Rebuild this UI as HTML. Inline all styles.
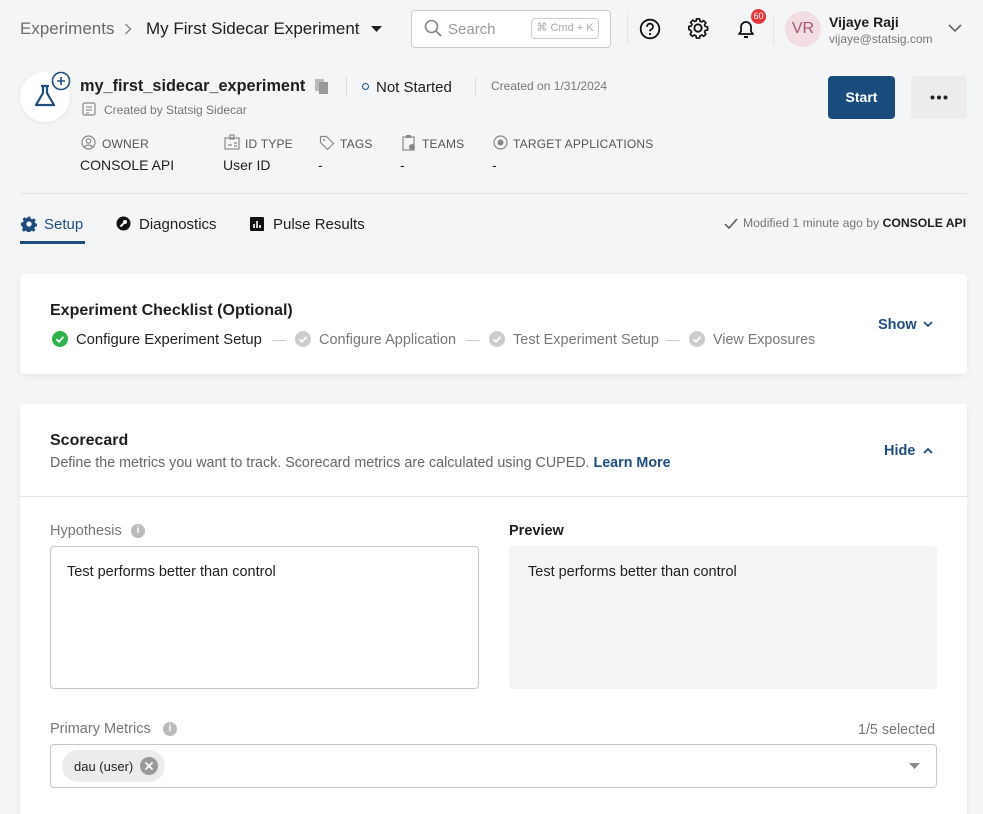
<!DOCTYPE html>
<html><head><meta charset="utf-8"><style>
*{box-sizing:border-box;margin:0;padding:0}
html{width:983px;height:814px;overflow:hidden}
body{width:983px;height:814px;overflow:hidden;background:#f4f5f7;font-family:"Liberation Sans",sans-serif;color:#1f1f1f;position:relative}
.a{position:absolute;white-space:nowrap}
.card{position:absolute;background:#fff;border-radius:4px;box-shadow:0 2px 6px rgba(0,0,0,.06)}
.lbl{font-size:12px;color:#555;letter-spacing:.2px}
.val{font-size:14px;color:#1f1f1f}
.g{color:#777}
</style></head><body>
<!-- header -->
<div class="a" style="left:20px;top:19px;font-size:17px;color:#6b6b6b">Experiments</div>
<svg class="a" style="left:124px;top:23px" width="8" height="12"><path d="M1.5 1l5 5-5 5" fill="none" stroke="#888" stroke-width="1.5"/></svg>
<div class="a" style="left:146px;top:19px;font-size:17px;color:#1f1f1f">My First Sidecar Experiment</div>
<svg class="a" style="left:371px;top:26px" width="11" height="6"><path d="M0 0h11L5.5 6z" fill="#222"/></svg>
<div class="a" style="left:411px;top:10px;width:200px;height:38px;border:1px solid #ccc;border-radius:4px;background:#fff"></div>
<svg class="a" style="left:424px;top:19px" width="18" height="18"><circle cx="7.5" cy="7.5" r="6" fill="none" stroke="#888" stroke-width="1.6"/><path d="M12 12l5 5" stroke="#888" stroke-width="1.8"/></svg>
<div class="a" style="left:448px;top:21px;font-size:15px;color:#999">Search</div>
<div class="a" style="left:531px;top:18px;width:68px;height:21px;border:1px solid #ccc;border-radius:4px;font-size:11px;color:#aaa;text-align:center;line-height:19px">⌘ Cmd + K</div>
<div class="a" style="left:627px;top:14px;width:1px;height:30px;background:#e2e2e2"></div>
<svg class="a" style="left:639px;top:18px" width="22" height="22"><circle cx="11" cy="11" r="9.3" fill="none" stroke="#111" stroke-width="1.8"/><path d="M8 8.7a3 3 0 1 1 4 2.8c-.8.4-1 .9-1 1.8" fill="none" stroke="#111" stroke-width="1.8"/><circle cx="11" cy="16" r="1.1" fill="#111"/></svg>
<svg class="a" style="left:687px;top:17px" width="22" height="22" viewBox="0 0 24 24"><path d="M12 8a4 4 0 1 0 0 8a4 4 0 1 0 0-8z" fill="none" stroke="#111" stroke-width="2"/><path d="M10.3 2h3.4l.5 2.6 1.8.8 2.2-1.5 2.4 2.4-1.5 2.2.8 1.8 2.6.5v3.4l-2.6.5-.8 1.8 1.5 2.2-2.4 2.4-2.2-1.5-1.8.8-.5 2.6h-3.4l-.5-2.6-1.8-.8-2.2 1.5-2.4-2.4 1.5-2.2-.8-1.8L2 13.7v-3.4l2.6-.5.8-1.8-1.5-2.2 2.4-2.4 2.2 1.5 1.8-.8z" fill="none" stroke="#111" stroke-width="1.8" stroke-linejoin="round"/></svg>
<svg class="a" style="left:736px;top:18px" width="20" height="22"><path d="M3 16h14l-2-2.5V9a5 5 0 0 0-10 0v4.5z" fill="none" stroke="#111" stroke-width="1.8" stroke-linejoin="round"/><path d="M8 19h4" stroke="#111" stroke-width="2"/></svg>
<div class="a" style="left:751px;top:9px;width:15px;height:15px;border-radius:50%;background:#e8363b;color:#fff;font-size:9px;text-align:center;line-height:15px">60</div>
<div class="a" style="left:773px;top:14px;width:1px;height:30px;background:#e2e2e2"></div>
<div class="a" style="left:785px;top:11px;width:36px;height:36px;border-radius:50%;background:#f2dde3;color:#a05a70;font-size:16px;text-align:center;line-height:36px">VR</div>
<div class="a" style="left:829px;top:14px;font-size:14px;font-weight:bold">Vijaye Raji</div>
<div class="a" style="left:829px;top:32px;font-size:12px;color:#777">vijaye@statsig.com</div>
<svg class="a" style="left:948px;top:24px" width="14" height="9"><path d="M1 1l6 6 6-6" fill="none" stroke="#666" stroke-width="1.6"/></svg>

<!-- experiment header -->
<div class="a" style="left:20px;top:72px;width:50px;height:50px;border-radius:50%;background:#fff;box-shadow:0 1px 4px rgba(0,0,0,.08)"></div>
<svg class="a" style="left:33px;top:84px" width="24" height="24"><path d="M8 2h8M10 2v7L3 21h18L14 9V2" fill="none" stroke="#1f4e7e" stroke-width="2.2" stroke-linejoin="round"/></svg>
<svg class="a" style="left:51px;top:71px" width="20" height="20"><circle cx="10" cy="10" r="8.5" fill="#fff" stroke="#1f4e7e" stroke-width="1.6"/><path d="M10 6v8M6 10h8" stroke="#1f4e7e" stroke-width="1.6"/></svg>
<div class="a" style="left:80px;top:77px;font-size:16.3px;font-weight:bold">my_first_sidecar_experiment</div>
<svg class="a" style="left:314px;top:78px" width="16" height="18"><rect x="1" y="1" width="9" height="12" fill="#bbb"/><rect x="5" y="4" width="9" height="12" fill="#999"/></svg>
<div class="a" style="left:346px;top:77px;width:1px;height:20px;background:#ddd"></div>
<div class="a" style="left:362px;top:83px;width:7px;height:7px;border-radius:50%;border:1.5px solid #1f4e7e"></div>
<div class="a" style="left:376px;top:79px;font-size:15px">Not Started</div>
<div class="a" style="left:475px;top:77px;width:1px;height:20px;background:#ddd"></div>
<div class="a" style="left:491px;top:79px;font-size:12px;color:#777">Created on 1/31/2024</div>
<svg class="a" style="left:82px;top:102px" width="14" height="14"><rect x="1" y="1" width="12" height="12" rx="1.5" fill="none" stroke="#999" stroke-width="1.4"/><path d="M4 5h6M4 8h6M4 11h3" stroke="#999" stroke-width="1.3"/></svg>
<div class="a" style="left:104px;top:103px;font-size:12px;color:#777">Created by Statsig Sidecar</div>
<div class="a" style="left:828px;top:76px;width:67px;height:43px;border-radius:4px;background:#194b7d;color:#fff;font-weight:bold;font-size:14px;text-align:center;line-height:43px">Start</div>
<div class="a" style="left:911px;top:76px;width:56px;height:43px;border-radius:4px;background:#ececec"></div>
<svg class="a" style="left:930px;top:95px" width="18" height="5"><circle cx="2.5" cy="2.5" r="2" fill="#222"/><circle cx="9" cy="2.5" r="2" fill="#222"/><circle cx="15.5" cy="2.5" r="2" fill="#222"/></svg>

<svg class="a" style="left:81px;top:135px" width="15" height="15"><circle cx="7.5" cy="7.5" r="6.5" fill="none" stroke="#888" stroke-width="1.2"/><circle cx="7.5" cy="6" r="2.2" fill="none" stroke="#888" stroke-width="1.2"/><path d="M3.5 12a4.5 3.5 0 0 1 8 0" fill="none" stroke="#888" stroke-width="1.2"/></svg>
<div class="a lbl" style="left:102px;top:137px">OWNER</div>
<div class="a val" style="left:80px;top:157px">CONSOLE API</div>
<svg class="a" style="left:224px;top:134px" width="16" height="16"><rect x="1" y="4" width="14" height="11" fill="none" stroke="#888" stroke-width="1.2"/><rect x="6" y="1" width="4" height="4" fill="none" stroke="#888" stroke-width="1.2"/><path d="M4 11h4M10 9h3M10 12h3" stroke="#888" stroke-width="1.2"/></svg>
<div class="a lbl" style="left:245px;top:137px">ID TYPE</div>
<div class="a val" style="left:223px;top:157px">User ID</div>
<svg class="a" style="left:319px;top:135px" width="16" height="16"><path d="M1.5 1.5h6l7 7-6 6-7-7z" fill="none" stroke="#888" stroke-width="1.2" stroke-linejoin="round"/><circle cx="5" cy="5" r="1" fill="#888"/></svg>
<div class="a lbl" style="left:340px;top:137px">TAGS</div>
<div class="a val" style="left:318px;top:157px">-</div>
<svg class="a" style="left:402px;top:134px" width="14" height="17"><rect x="1" y="3" width="11" height="13" fill="none" stroke="#888" stroke-width="1.2"/><rect x="4" y="1" width="5" height="3" fill="#888"/><circle cx="10" cy="13" r="3" fill="#888"/></svg>
<div class="a lbl" style="left:422px;top:137px">TEAMS</div>
<div class="a val" style="left:400px;top:157px">-</div>
<svg class="a" style="left:493px;top:135px" width="15" height="15"><circle cx="7.5" cy="7.5" r="6.5" fill="none" stroke="#888" stroke-width="1.2"/><circle cx="7.5" cy="7.5" r="3" fill="#888"/></svg>
<div class="a lbl" style="left:513px;top:137px">TARGET APPLICATIONS</div>
<div class="a val" style="left:492px;top:157px">-</div>

<div class="a" style="left:20px;top:193px;width:947px;height:1px;background:#e4e4e4"></div>

<!-- tabs -->
<svg class="a" style="left:21px;top:216px" width="16" height="16" viewBox="0 0 24 24"><path d="M12 8a4 4 0 1 0 0 8a4 4 0 1 0 0-8zM10 1h4l.6 3 2.2 1 2.6-1.7 2.8 2.8L20.5 8.7l1 2.2 2.5.6v4l-3 .6-1 2.2 1.7 2.6-2.8 2.8-2.6-1.7-2.2 1-.6 2.9h-4l-.6-3-2.2-1-2.6 1.7-2.8-2.8 1.7-2.6-1-2.2L0 14v-4l3-.6 1-2.2L2.3 4.6 5.1 1.8l2.6 1.7 2.2-1z" fill="#1f4e7e" fill-rule="evenodd"/></svg>
<div class="a" style="left:44px;top:216px;font-size:15px;color:#1f4e7e">Setup</div>
<div class="a" style="left:20px;top:241px;width:65px;height:3px;background:#1f4e7e"></div>
<svg class="a" style="left:116px;top:216px" width="15" height="15"><circle cx="7.5" cy="7.5" r="7" fill="#111"/><path d="M4.5 10.5l3.5-3.5" stroke="#fff" stroke-width="2"/><circle cx="9" cy="6" r="2" fill="#fff"/></svg>
<div class="a" style="left:139px;top:216px;font-size:15px">Diagnostics</div>
<svg class="a" style="left:250px;top:217px" width="14" height="14"><rect width="14" height="14" rx="1" fill="#111"/><path d="M4 11V7M7 11V4M10 11V8" stroke="#fff" stroke-width="1.6"/></svg>
<div class="a" style="left:273px;top:216px;font-size:15px">Pulse Results</div>
<svg class="a" style="left:724px;top:218px" width="14" height="11"><path d="M1 6l4 4 8-9" fill="none" stroke="#555" stroke-width="1.5"/></svg>
<div class="a" style="left:743px;top:216px;font-size:12.2px;color:#777">Modified 1 minute ago by <b style="color:#1f1f1f">CONSOLE API</b></div>

<!-- checklist card -->
<div class="card" style="left:20px;top:274px;width:947px;height:100px"></div>
<div class="a" style="left:50px;top:302px;font-size:16px;font-weight:bold">Experiment Checklist (Optional)</div>
<svg class="a" style="left:52px;top:331px" width="16" height="16"><circle cx="8" cy="8" r="8" fill="#30b34c"/><path d="M4.5 8.3l2.5 2.5 4.5-5" fill="none" stroke="#fff" stroke-width="1.8"/></svg>
<div class="a" style="left:76px;top:332px;font-size:14.8px">Configure Experiment Setup</div>
<div class="a" style="left:272px;top:340px;width:14px;height:1px;background:#ccc"></div>
<svg class="a" style="left:295px;top:331px" width="16" height="16"><circle cx="8" cy="8" r="8" fill="#ccc"/><path d="M4.5 8.3l2.5 2.5 4.5-5" fill="none" stroke="#fff" stroke-width="1.8"/></svg>
<div class="a g" style="left:319px;top:332px;font-size:14.5px">Configure Application</div>
<div class="a" style="left:466px;top:340px;width:14px;height:1px;background:#ccc"></div>
<svg class="a" style="left:489px;top:331px" width="16" height="16"><circle cx="8" cy="8" r="8" fill="#ccc"/><path d="M4.5 8.3l2.5 2.5 4.5-5" fill="none" stroke="#fff" stroke-width="1.8"/></svg>
<div class="a g" style="left:513px;top:332px;font-size:14.5px">Test Experiment Setup</div>
<div class="a" style="left:666px;top:340px;width:14px;height:1px;background:#ccc"></div>
<svg class="a" style="left:689px;top:331px" width="16" height="16"><circle cx="8" cy="8" r="8" fill="#ccc"/><path d="M4.5 8.3l2.5 2.5 4.5-5" fill="none" stroke="#fff" stroke-width="1.8"/></svg>
<div class="a g" style="left:713px;top:332px;font-size:14.3px">View Exposures</div>
<div class="a" style="left:878px;top:317px;font-size:14.5px;color:#1f4e7e;font-weight:bold">Show</div>
<svg class="a" style="left:923px;top:321px" width="10" height="7"><path d="M1 1l4 4 4-4" fill="none" stroke="#1f4e7e" stroke-width="1.8"/></svg>

<!-- scorecard card -->
<div class="card" style="left:20px;top:404px;width:947px;height:420px"></div>
<div class="a" style="left:50px;top:432px;font-size:16px;font-weight:bold">Scorecard</div>
<div class="a" style="left:50px;top:455px;font-size:14.3px;color:#666">Define the metrics you want to track. Scorecard metrics are calculated using CUPED. <b style="color:#1f4e7e">Learn More</b></div>
<div class="a" style="left:884px;top:443px;font-size:14.5px;color:#1f4e7e;font-weight:bold">Hide</div>
<svg class="a" style="left:923px;top:447px" width="10" height="7"><path d="M1 6l4-4 4 4" fill="none" stroke="#1f4e7e" stroke-width="1.8"/></svg>
<div class="a" style="left:20px;top:496px;width:947px;height:1px;background:#e4e4e4"></div>

<div class="a" style="left:50px;top:523px;font-size:14.5px;color:#777">Hypothesis</div>
<div class="a" style="left:131px;top:524px;width:14px;height:14px;border-radius:50%;background:#bbb;color:#fff;font-size:10px;font-weight:bold;text-align:center;line-height:14px">i</div>
<div class="a" style="left:50px;top:546px;width:429px;height:143px;border:1px solid #c8c8c8;border-radius:4px;background:#fff"></div>
<div class="a" style="left:67px;top:564px;font-size:14.5px">Test performs better than control</div>
<div class="a" style="left:509px;top:523px;font-size:14.5px;font-weight:bold">Preview</div>
<div class="a" style="left:509px;top:546px;width:428px;height:143px;border-radius:4px;background:#f4f4f4"></div>
<div class="a" style="left:528px;top:564px;font-size:14.5px">Test performs better than control</div>

<div class="a" style="left:50px;top:721px;font-size:14.5px;color:#777">Primary Metrics</div>
<div class="a" style="left:163px;top:722px;width:14px;height:14px;border-radius:50%;background:#bbb;color:#fff;font-size:10px;font-weight:bold;text-align:center;line-height:14px">i</div>
<div class="a" style="left:858px;top:722px;font-size:14.3px;color:#777">1/5 selected</div>
<div class="a" style="left:50px;top:744px;width:887px;height:44px;border:1px solid #c8c8c8;border-radius:4px;background:#fff"></div>
<div class="a" style="left:62px;top:750px;width:103px;height:32px;border-radius:16px;background:#ececec"></div>
<div class="a" style="left:74px;top:759px;font-size:13px">dau (user)</div>
<svg class="a" style="left:140px;top:757px" width="18" height="18"><circle cx="9" cy="9" r="9" fill="#999"/><path d="M5.5 5.5l7 7M12.5 5.5l-7 7" stroke="#fff" stroke-width="1.8"/></svg>
<svg class="a" style="left:909px;top:763px" width="11" height="6"><path d="M0 0h11L5.5 6z" fill="#888"/></svg>
</body></html>
